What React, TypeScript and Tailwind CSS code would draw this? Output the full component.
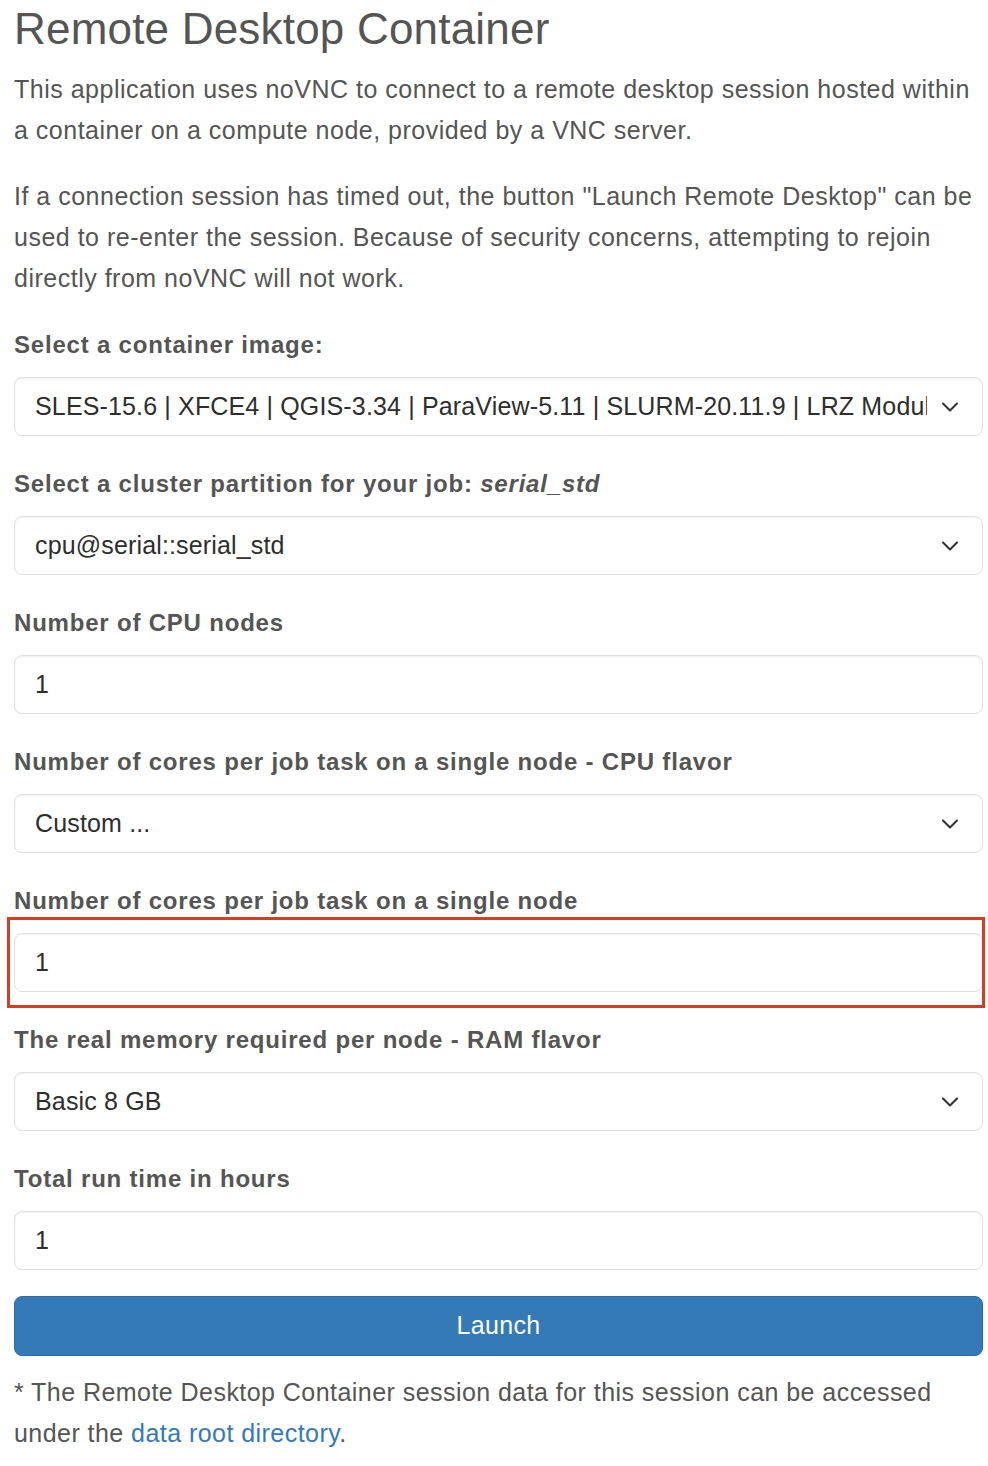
import React from 'react';
import { ChevronDown } from 'lucide-react';

interface FieldProps {
  label: React.ReactNode;
  value: string;
  select?: boolean;
  highlight?: boolean;
}

const Field: React.FC<FieldProps> = ({ label, value, select = false, highlight = false }) => (
  <div className="mb-[27px]">
    <div className="font-bold text-[24px] tracking-[0.8px] leading-[41px] text-[#555555] mb-3">{label}</div>
    <div className="relative">
      {highlight && (
        <div className="absolute -left-[7px] -top-[16px] -right-[2px] -bottom-[16px] border-[3px] border-[#d63d22] pointer-events-none z-10" />
      )}
      <div className="h-[59px] flex items-center rounded-lg border border-[#e0e0e0] bg-white shadow-[inset_0_1px_2px_rgba(0,0,0,0.06)] pl-5 pr-[55px] relative">
        <span className="text-[25px] tracking-[0.15px] text-[#2e2e2e] whitespace-nowrap overflow-hidden">{value}</span>
        {select && (
          <ChevronDown size={28} strokeWidth={1.8} className="absolute right-[18px] top-1/2 -translate-y-1/2 text-[#333333]" />
        )}
      </div>
    </div>
  </div>
);

export default function App() {
  return (
    <div className="bg-white min-h-[1466px] pl-[14px] pr-[5px] pt-[3px] font-['Liberation_Sans',Arial,sans-serif]">
      <h1 className="text-[44px] tracking-[0.2px] leading-[52px] text-[#555555] mb-[14px]">Remote Desktop Container</h1>
      <p className="text-[25px] tracking-[0.5px] leading-[41px] text-[#555555] mb-[25px]">
        This application uses noVNC to connect to a remote desktop session hosted within
        <br />
        a container on a compute node, provided by a VNC server.
      </p>
      <p className="text-[25px] tracking-[0.5px] leading-[41px] text-[#555555] mb-[25px]">
        If a connection session has timed out, the button "Launch Remote Desktop" can be
        <br />
        used to re-enter the session. Because of security concerns, attempting to rejoin
        <br />
        directly from noVNC will not work.
      </p>

      <Field
        label="Select a container image:"
        value="SLES-15.6 | XFCE4 | QGIS-3.34 | ParaView-5.11 | SLURM-20.11.9 | LRZ Modules"
        select
      />
      <Field
        label={
          <>
            Select a cluster partition for your job: <i>serial_std</i>
          </>
        }
        value="cpu@serial::serial_std"
        select
      />
      <Field label="Number of CPU nodes" value="1" />
      <Field label="Number of cores per job task on a single node - CPU flavor" value="Custom ..." select />
      <Field label="Number of cores per job task on a single node" value="1" highlight />
      <Field label="The real memory required per node - RAM flavor" value="Basic 8 GB" select />
      <div className="mb-[-1px]">
        <Field label="Total run time in hours" value="1" />
      </div>

      <button className="w-full h-[60px] rounded-lg bg-[#337ab7] text-white text-[25px] tracking-[0.3px] border border-[#2e6da4]">
        Launch
      </button>

      <p className="mt-[16px] text-[25px] tracking-[0.45px] leading-[41px] text-[#555555]">
        * The Remote Desktop Container session data for this session can be accessed
        <br />
        under the <a className="text-[#337ab7]">data root directory</a>.
      </p>
    </div>
  );
}
